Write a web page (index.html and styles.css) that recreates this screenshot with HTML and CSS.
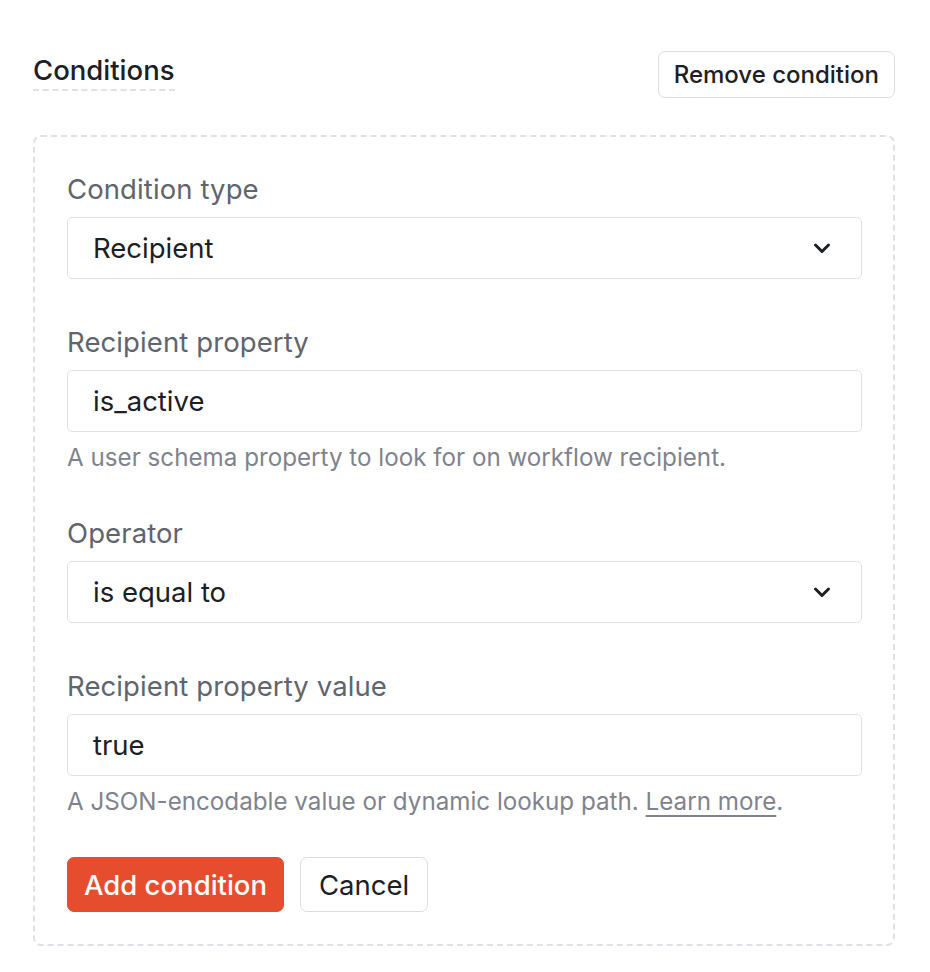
FILE: index.html
```html
<!DOCTYPE html>
<html lang="en">
<head>
<meta charset="utf-8">
<title>Conditions</title>
<link rel="stylesheet" href="styles.css">
</head>
<body>
<div class="page">
  <div class="header">
    <h2 class="title">Conditions</h2>
    <button class="btn btn-outline btn-sm">Remove condition</button>
  </div>
  <div class="panel">
    <div class="field">
      <label class="label">Condition type</label>
      <div class="select">
        <span>Recipient</span>
        <svg class="chev" width="24" height="24" viewBox="0 0 24 24" fill="none" stroke="currentColor" stroke-width="3" stroke-linecap="round" stroke-linejoin="round"><path d="M5.5 9l6.5 6.5 6.5-6.5"/></svg>
      </div>
    </div>
    <div class="field">
      <label class="label">Recipient property</label>
      <div class="input">is_active</div>
      <p class="help">A user schema property to look for on workflow recipient.</p>
    </div>
    <div class="field">
      <label class="label">Operator</label>
      <div class="select">
        <span>is equal to</span>
        <svg class="chev" width="24" height="24" viewBox="0 0 24 24" fill="none" stroke="currentColor" stroke-width="3" stroke-linecap="round" stroke-linejoin="round"><path d="M5.5 9l6.5 6.5 6.5-6.5"/></svg>
      </div>
    </div>
    <div class="field">
      <label class="label">Recipient property value</label>
      <div class="input">true</div>
      <p class="help">A JSON-encodable value or dynamic lookup path. <a class="link" href="#">Learn more</a>.</p>
    </div>
    <div class="actions">
      <button class="btn btn-primary">Add condition</button>
      <button class="btn btn-outline">Cancel</button>
    </div>
  </div>
</div>
</body>
</html>
```

FILE: styles.css
```css
* { box-sizing: border-box; }
html, body { margin: 0; padding: 0; background: #ffffff; }
body {
  font-family: Inter, "Noto Sans", sans-serif;
  color: #1c2024;
}
.page {
  width: 930px;
  padding: 51px 35px 0 33px;
}
.header {
  display: flex;
  justify-content: space-between;
  align-items: flex-start;
  height: 84px;
}
.title {
  margin: 0;
  margin-top: 3px;
  font-size: 27.5px;
  font-weight: 500;
  line-height: 32px;
  padding-bottom: 3px;
  border-bottom: 2px dashed #e0e1e6;
}
.btn {
  font-family: Inter, "Noto Sans", sans-serif;
  border-radius: 7px;
  cursor: pointer;
  display: inline-flex;
  align-items: center;
  justify-content: center;
}
.btn-sm {
  height: 47px;
  padding: 0 15px;
  font-size: 24px;
  font-weight: 500;
}
.btn-outline {
  background: #fff;
  border: 1.5px solid #dcdde2;
  color: #1c2024;
}
.panel {
  border: 2px dashed #e0e1e6;
  border-radius: 8px;
  padding: 36px 32px 32px 32px;
}
.field { margin-bottom: 47px; }
.field:nth-of-type(4) { margin-bottom: 43px; }
.label {
  display: block;
  font-size: 27.5px;
  line-height: 32px;
  font-weight: 400;
  color: #60646c;
  margin-bottom: 12px;
  letter-spacing: 0.1px;
}
.select, .input {
  height: 62px;
  border: 1.5px solid #e0e1e6;
  border-radius: 5px;
  display: flex;
  align-items: center;
  padding: 0 25px;
  font-size: 27.5px;
  color: #1c2024;
  width: 795px;
}
.select { justify-content: space-between; padding-right: 27px; }
.chev { color: #1c2024; }
.help {
  margin: 14px 0 0 0;
  font-size: 24.2px;
  line-height: 24px;
  color: #80838d;
}
.link {
  color: #80838d;
  text-decoration: underline;
  text-decoration-color: #80838d;
  text-underline-offset: 5px;
  text-decoration-thickness: 2px;
}
.actions { display: flex; gap: 16px; }
.actions .btn {
  height: 55px;
  font-size: 27.5px;
  font-weight: 500;
  padding: 0 16px;
}
.btn-primary {
  background: #e54d2e;
  border: 1.5px solid #e54d2e;
  color: #fff;
}
.actions .btn-outline { padding: 0 18px; font-weight: 400; }
```
